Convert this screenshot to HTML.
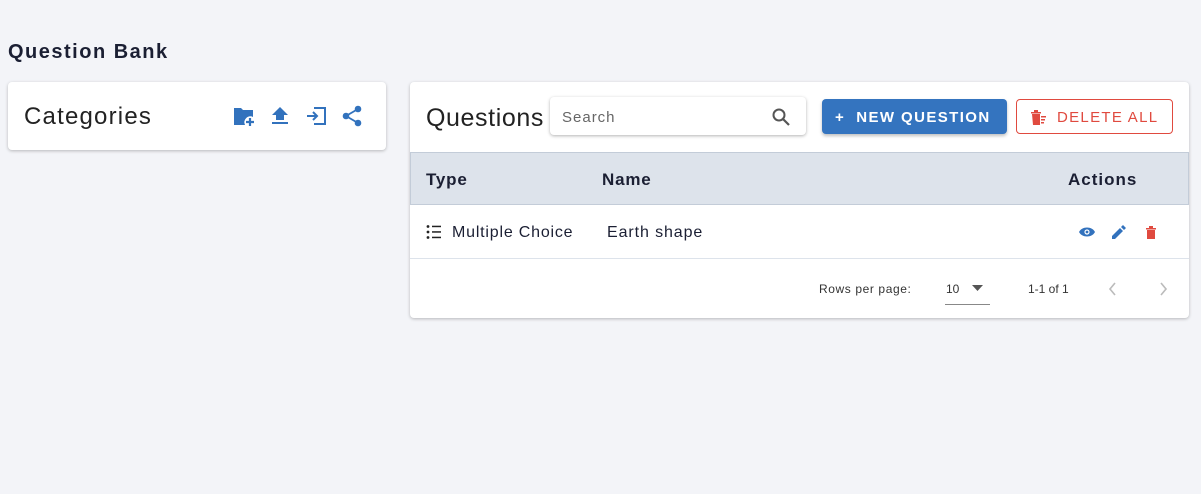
<!DOCTYPE html>
<html><head><style>
*{box-sizing:border-box;margin:0;padding:0}
body{width:1201px;height:494px;background:#f3f4f8;font-family:"Liberation Sans",sans-serif;color:#1b1f33;position:relative;overflow:hidden}
.a{position:absolute}
.card{position:absolute;background:#fff;border-radius:4px;box-shadow:0 1px 3px rgba(0,0,0,.25)}
.t{position:absolute;white-space:nowrap;line-height:1}
</style></head><body>
<div class="t" style="left:8px;top:42px;font-size:20px;font-weight:bold;letter-spacing:1.5px">Question Bank</div>

<div class="card" style="left:8px;top:82px;width:378px;height:68px"></div>
<div class="t" style="left:24px;top:105px;font-size:24px;color:#222;letter-spacing:1.2px">Categories</div>
<svg class="a" style="left:232px;top:104px" width="26" height="24" viewBox="0 0 26 24"><path d="M2 4h7l2 2h10v7a6 6 0 0 0-8 8H2z" fill="#3272bd"/><path d="M18 14v8M14 18h8" stroke="#3272bd" stroke-width="2.2"/></svg>
<svg class="a" style="left:270px;top:106px" width="20" height="20" viewBox="0 0 20 20"><path d="M6 14h8V9h4L10 1 2 9h4z M2 16h16v2H2z" fill="#3272bd"/></svg>
<svg class="a" style="left:305px;top:106px" width="22" height="20" viewBox="0 0 22 20"><path d="M9 2h11v16H9" fill="none" stroke="#3272bd" stroke-width="2"/><path d="M2 10h10M8 6l4 4-4 4" fill="none" stroke="#3272bd" stroke-width="2"/></svg>
<svg class="a" style="left:341px;top:105px" width="22" height="22" viewBox="0 0 22 22"><circle cx="17" cy="4" r="3.3" fill="#3272bd"/><circle cx="5" cy="11" r="3.3" fill="#3272bd"/><circle cx="17" cy="18" r="3.3" fill="#3272bd"/><path d="M17 4L5 11l12 7" fill="none" stroke="#3272bd" stroke-width="1.8"/></svg>

<div class="card" style="left:410px;top:82px;width:779px;height:236px"></div>
<div class="t" style="left:426px;top:106px;font-size:25px;color:#222;letter-spacing:0.6px">Questions</div>
<div class="card" style="left:550px;top:97px;width:256px;height:38px;box-shadow:0 1px 3px rgba(0,0,0,.3)"></div>
<div class="t" style="left:562px;top:110px;font-size:15px;color:#666;letter-spacing:1px">Search</div>
<svg class="a" style="left:771px;top:107px" width="20" height="20" viewBox="0 0 20 20"><circle cx="8" cy="8" r="5.5" fill="none" stroke="#555" stroke-width="2"/><path d="M12 12l6 6" stroke="#555" stroke-width="2.2"/></svg>
<div class="a" style="left:822px;top:99px;width:185px;height:35px;background:#3474bf;border-radius:4px;box-shadow:0 2px 3px rgba(0,0,0,.25)"></div>
<div class="t" style="left:835px;top:110px;font-size:15px;color:#fff;font-weight:bold;letter-spacing:1.4px">+&nbsp; NEW QUESTION</div>
<div class="a" style="left:1016px;top:99px;width:157px;height:35px;border:1px solid #e04a3f;border-radius:4px"></div>
<svg class="a" style="left:1031px;top:110px" width="16" height="16" viewBox="0 0 16 16"><path d="M1 4h8v11H2z M0 2h10v1.5H0z M3 0h4v2H3z M10 6h5v1.5h-5z M10 9h4v1.5h-4z M10 12h3v1.5h-3z" fill="#e04a3f"/></svg>
<div class="t" style="left:1057px;top:110px;font-size:15px;color:#e04a3f;letter-spacing:1.3px">DELETE ALL</div>

<div class="a" style="left:410px;top:152px;width:779px;height:53px;background:#dde3eb;border:1px solid #c3ccd8"></div>
<div class="t" style="left:426px;top:171px;font-size:17px;font-weight:bold;letter-spacing:0.8px">Type</div>
<div class="t" style="left:602px;top:171px;font-size:17px;font-weight:bold;letter-spacing:0.8px">Name</div>
<div class="t" style="left:1068px;top:171px;font-size:17px;font-weight:bold;letter-spacing:1px">Actions</div>

<svg class="a" style="left:426px;top:224px" width="16" height="16" viewBox="0 0 16 16"><g fill="#222"><circle cx="2" cy="2.5" r="1.4"/><circle cx="2" cy="8" r="1.4"/><circle cx="2" cy="13.5" r="1.4"/><rect x="6" y="1.7" width="9" height="1.5"/><rect x="6" y="7.2" width="9" height="1.5"/><rect x="6" y="12.7" width="9" height="1.5"/></g></svg>
<div class="t" style="left:452px;top:225px;font-size:16px;letter-spacing:0.8px">Multiple Choice</div>
<div class="t" style="left:607px;top:225px;font-size:16px;letter-spacing:0.9px">Earth shape</div>
<svg class="a" style="left:1079px;top:226px" width="16" height="12" viewBox="0 0 16 12"><path d="M0 6C3 0 13 0 16 6 13 12 3 12 0 6z" fill="#3272bd"/><circle cx="8" cy="6" r="2.6" fill="#fff"/><circle cx="8" cy="6" r="1.4" fill="#3272bd"/></svg>
<svg class="a" style="left:1112px;top:225px" width="14" height="14" viewBox="0 0 14 14"><path d="M0 11v3h3l8-8-3-3z M9 2l3 3 2-2-3-3z" fill="#3272bd"/></svg>
<svg class="a" style="left:1145px;top:225px" width="12" height="14" viewBox="0 0 12 14"><path d="M1 3h10v1.5H1z M4 1h4v2H4z M2 5h8v9H2z" fill="#e04a3f"/></svg>
<div class="a" style="left:410px;top:258px;width:779px;height:1px;background:#dde3eb"></div>

<div class="t" style="left:819px;top:283px;font-size:12px;color:#333;letter-spacing:0.6px">Rows per page:</div>
<div class="t" style="left:946px;top:283px;font-size:12px;color:#333">10</div>
<svg class="a" style="left:972px;top:285px" width="12" height="7"><path d="M0 0h11L5.5 6z" fill="#555"/></svg>
<div class="a" style="left:945px;top:304px;width:45px;height:1px;background:#888"></div>
<div class="t" style="left:1028px;top:283px;font-size:12px;color:#333">1-1 of 1</div>
<svg class="a" style="left:1108px;top:282px" width="10" height="14"><path d="M7 1L2 7l5 6" fill="none" stroke="#bbb" stroke-width="1.6"/></svg>
<svg class="a" style="left:1158px;top:282px" width="10" height="14"><path d="M3 1l5 6-5 6" fill="none" stroke="#bbb" stroke-width="1.6"/></svg>
</body></html>
